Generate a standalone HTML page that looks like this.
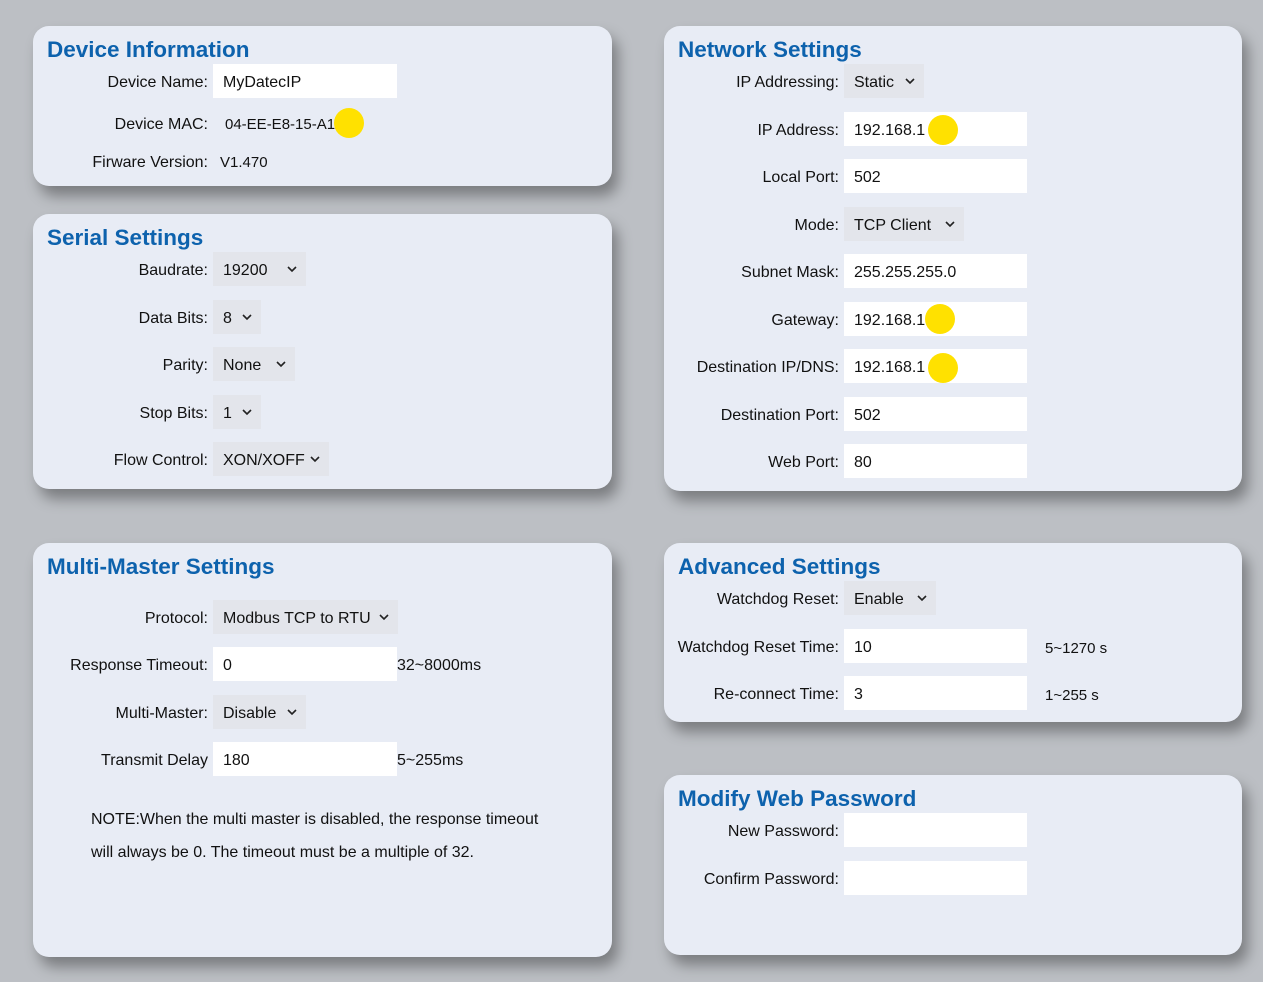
<!DOCTYPE html>
<html><head><meta charset="utf-8"><style>
*{margin:0;padding:0;box-sizing:border-box}
body{width:1263px;height:982px;background:#bcbfc4;font-family:"Liberation Sans",Arial,sans-serif;position:relative;overflow:hidden;color:#111}
.card{position:absolute;background:#e8ecf5;border-radius:16px;box-shadow:6px 10px 14px rgba(0,0,0,0.35)}
.t{position:absolute;font-size:22.5px;font-weight:bold;color:#0d62ad;line-height:26px;margin-top:1px}
.l{position:absolute;text-align:right;font-size:16px;line-height:20px;white-space:nowrap;margin-top:2px}
.i{position:absolute;background:#fff;height:34px;font-size:16px;line-height:37px;padding-left:10px}
.s{position:absolute;background:#e3e5eb;height:34px;font-size:16px;line-height:37px;padding-left:10px}
.s svg{position:absolute;right:9px;top:14px}
.v{position:absolute;font-size:15px;line-height:20px;margin-top:2px}
.y{position:absolute;width:30px;height:30px;border-radius:50%;background:#ffe100}
</style></head><body>
<div class="card" style="left:33px;top:26px;width:579px;height:160px"></div>
<div class="card" style="left:33px;top:214px;width:579px;height:275px"></div>
<div class="card" style="left:33px;top:543px;width:579px;height:414px"></div>
<div class="card" style="left:664px;top:26px;width:578px;height:465px"></div>
<div class="card" style="left:664px;top:543px;width:578px;height:179px"></div>
<div class="card" style="left:664px;top:775px;width:578px;height:180px"></div>

<div class="t" style="left:47px;top:36px">Device Information</div>
<div class="l" style="left:33px;width:175px;top:71px">Device Name:</div>
<div class="i" style="left:213px;top:64px;width:184px">MyDatecIP</div>
<div class="l" style="left:33px;width:175px;top:113px">Device MAC:</div>
<div class="v" style="left:225px;top:113px">04-EE-E8-15-A1</div>
<div class="y" style="left:334px;top:108px"></div>
<div class="l" style="left:33px;width:175px;top:151px">Firware Version:</div>
<div class="v" style="left:220px;top:151px">V1.470</div>

<div class="t" style="left:47px;top:224px">Serial Settings</div>
<div class="l" style="left:33px;width:175px;top:259px">Baudrate:</div>
<div class="s" style="left:213px;top:252px;width:93px">19200<svg width="10" height="7"><path d="M1 1l4 4 4-4" fill="none" stroke="#222" stroke-width="1.6"/></svg></div>
<div class="l" style="left:33px;width:175px;top:307px">Data Bits:</div>
<div class="s" style="left:213px;top:300px;width:48px">8<svg width="10" height="7"><path d="M1 1l4 4 4-4" fill="none" stroke="#222" stroke-width="1.6"/></svg></div>
<div class="l" style="left:33px;width:175px;top:354px">Parity:</div>
<div class="s" style="left:213px;top:347px;width:82px">None<svg width="10" height="7"><path d="M1 1l4 4 4-4" fill="none" stroke="#222" stroke-width="1.6"/></svg></div>
<div class="l" style="left:33px;width:175px;top:402px">Stop Bits:</div>
<div class="s" style="left:213px;top:395px;width:48px">1<svg width="10" height="7"><path d="M1 1l4 4 4-4" fill="none" stroke="#222" stroke-width="1.6"/></svg></div>
<div class="l" style="left:33px;width:175px;top:449px">Flow Control:</div>
<div class="s" style="left:213px;top:442px;width:116px">XON/XOFF<svg width="10" height="7"><path d="M1 1l4 4 4-4" fill="none" stroke="#222" stroke-width="1.6"/></svg></div>

<div class="t" style="left:47px;top:553px">Multi-Master Settings</div>
<div class="l" style="left:33px;width:175px;top:607px">Protocol:</div>
<div class="s" style="left:213px;top:600px;width:185px">Modbus TCP to RTU<svg width="10" height="7"><path d="M1 1l4 4 4-4" fill="none" stroke="#222" stroke-width="1.6"/></svg></div>
<div class="l" style="left:33px;width:175px;top:654px">Response Timeout:</div>
<div class="i" style="left:213px;top:647px;width:184px">0</div>
<div class="l" style="left:397px;top:654px">32~8000ms</div>
<div class="l" style="left:33px;width:175px;top:702px">Multi-Master:</div>
<div class="s" style="left:213px;top:695px;width:93px">Disable<svg width="10" height="7"><path d="M1 1l4 4 4-4" fill="none" stroke="#222" stroke-width="1.6"/></svg></div>
<div class="l" style="left:33px;width:175px;top:749px">Transmit Delay</div>
<div class="i" style="left:213px;top:742px;width:184px">180</div>
<div class="l" style="left:397px;top:749px">5~255ms</div>
<div class="l" style="left:91px;top:808px;text-align:left">NOTE:When the multi master is disabled, the response timeout</div>
<div class="l" style="left:91px;top:841px;text-align:left">will always be 0. The timeout must be a multiple of 32.</div>

<div class="t" style="left:678px;top:36px">Network Settings</div>
<div class="l" style="left:664px;width:175px;top:71px">IP Addressing:</div>
<div class="s" style="left:844px;top:64px;width:80px">Static<svg width="10" height="7"><path d="M1 1l4 4 4-4" fill="none" stroke="#222" stroke-width="1.6"/></svg></div>
<div class="l" style="left:664px;width:175px;top:119px">IP Address:</div>
<div class="i" style="left:844px;top:112px;width:183px">192.168.1</div>
<div class="y" style="left:928px;top:115px"></div>
<div class="l" style="left:664px;width:175px;top:166px">Local Port:</div>
<div class="i" style="left:844px;top:159px;width:183px">502</div>
<div class="l" style="left:664px;width:175px;top:214px">Mode:</div>
<div class="s" style="left:844px;top:207px;width:120px">TCP Client<svg width="10" height="7"><path d="M1 1l4 4 4-4" fill="none" stroke="#222" stroke-width="1.6"/></svg></div>
<div class="l" style="left:664px;width:175px;top:261px">Subnet Mask:</div>
<div class="i" style="left:844px;top:254px;width:183px">255.255.255.0</div>
<div class="l" style="left:664px;width:175px;top:309px">Gateway:</div>
<div class="i" style="left:844px;top:302px;width:183px">192.168.1</div>
<div class="y" style="left:925px;top:304px"></div>
<div class="l" style="left:664px;width:175px;top:356px">Destination IP/DNS:</div>
<div class="i" style="left:844px;top:349px;width:183px">192.168.1</div>
<div class="y" style="left:928px;top:353px"></div>
<div class="l" style="left:664px;width:175px;top:404px">Destination Port:</div>
<div class="i" style="left:844px;top:397px;width:183px">502</div>
<div class="l" style="left:664px;width:175px;top:451px">Web Port:</div>
<div class="i" style="left:844px;top:444px;width:183px">80</div>

<div class="t" style="left:678px;top:553px">Advanced Settings</div>
<div class="l" style="left:664px;width:175px;top:588px">Watchdog Reset:</div>
<div class="s" style="left:844px;top:581px;width:92px">Enable<svg width="10" height="7"><path d="M1 1l4 4 4-4" fill="none" stroke="#222" stroke-width="1.6"/></svg></div>
<div class="l" style="left:664px;width:175px;top:636px">Watchdog Reset Time:</div>
<div class="i" style="left:844px;top:629px;width:183px">10</div>
<div class="v" style="left:1045px;top:637px">5~1270 s</div>
<div class="l" style="left:664px;width:175px;top:683px">Re-connect Time:</div>
<div class="i" style="left:844px;top:676px;width:183px">3</div>
<div class="v" style="left:1045px;top:684px">1~255 s</div>

<div class="t" style="left:678px;top:785px">Modify Web Password</div>
<div class="l" style="left:664px;width:175px;top:820px">New Password:</div>
<div class="i" style="left:844px;top:813px;width:183px"></div>
<div class="l" style="left:664px;width:175px;top:868px">Confirm Password:</div>
<div class="i" style="left:844px;top:861px;width:183px"></div>
</body></html>
